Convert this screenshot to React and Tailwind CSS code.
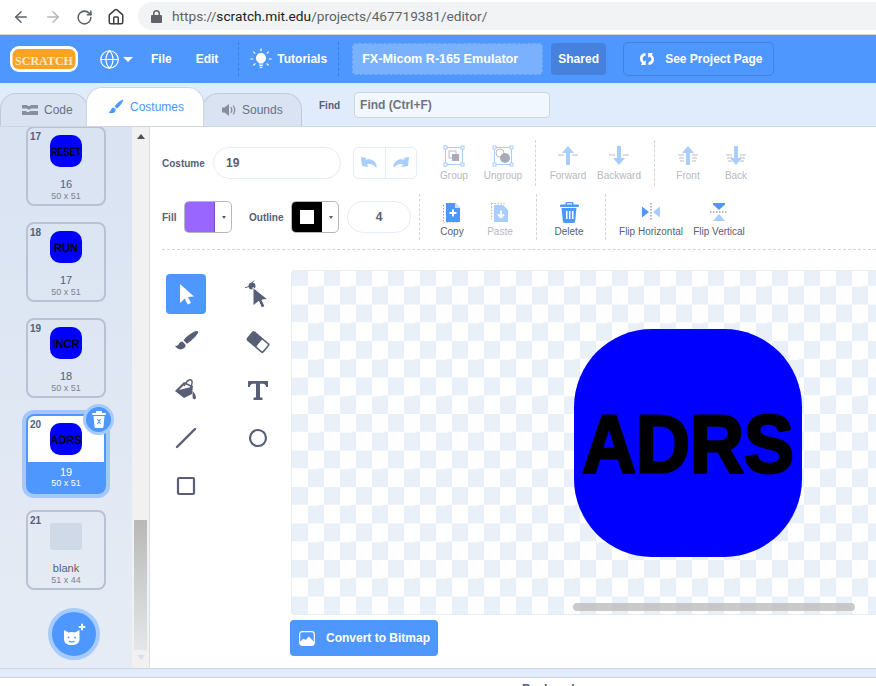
import { ArrowLeft, ArrowRight, RotateCw, Home, Globe } from "lucide-react";

const BLUE = "#4d97ff";

function Dashed({ className }) {
  return <span className={`block w-0 border-l border-dashed ${className}`} />;
}

function Logo() {
  return (
    <svg width="68" height="26" viewBox="0 0 68 26" className="shrink-0 overflow-visible">
      <rect width="68" height="26" rx="9" fill="#fff" />
      <rect x="2.500" y="3" width="63" height="20" rx="6" fill="#f9a326" />
      <text x="34" y="18.500" textAnchor="middle" fontFamily="'Liberation Serif', serif" fontWeight="700" fontSize="13" fill="#ffe9c4" textLength="58" lengthAdjust="spacingAndGlyphs">SCRATCH</text>
    </svg>
  );
}

function Bulb() {
  return (
    <svg width="22" height="22" viewBox="0 0 22 22" fill="#fff">
      <path d="M11 5a5 5 0 0 0-3 9c.6.5.9 1 1 1.600h4c.1-.6.4-1.100 1-1.600a5 5 0 0 0-3-9z" />
      <rect x="9" y="16.500" width="4" height="1.500" rx=".7" />
      <rect x="9.600" y="18.800" width="2.800" height="1.200" rx=".6" />
      <path d="M11 .8v2M3.500 3.800l1.400 1.400M18.500 3.800l-1.400 1.400M.8 11h2M19.200 11h2M3.800 17l1.300-1.200M18.200 17l-1.300-1.200" stroke="#fff" strokeWidth="1.200" strokeLinecap="round" />
    </svg>
  );
}

function ChromeBar() {
  return (
    <div className="h-[35px] shrink-0 flex items-center bg-white border-b border-[#d4d6d9]">
      <div className="w-[138px] flex items-center pl-[12px] gap-[14px] text-[#5f6368]">
        <ArrowLeft size={18} strokeWidth={2} />
        <ArrowRight size={18} strokeWidth={2} className="text-[#b4b6b9]" />
        <RotateCw size={17} strokeWidth={2.200} />
        <Home size={18} strokeWidth={2} className="text-[#3c4043]" />
      </div>
      <div className="flex-1 h-[28px] -mt-[2px] rounded-l-full bg-[#f1f3f4] flex items-center pl-[13px] font-['Roboto',sans-serif] text-[13.700px] text-[#5f6368]">
        <svg width="11" height="13" viewBox="0 0 11 13" className="mr-[10px]" fill="#5f6368">
          <path d="M2 5V3.600a3.500 3.500 0 0 1 7 0V5h1a1 1 0 0 1 1 1v6a1 1 0 0 1-1 1H1a1 1 0 0 1-1-1V6a1 1 0 0 1 1-1zm1.500 0h4V3.600a2 2 0 0 0-4 0z" />
        </svg>
        <span>https://<span className="text-[#202124]">scratch.mit.edu</span>/projects/467719381/editor/</span>
      </div>
    </div>
  );
}

function MenuBar() {
  return (
    <div className="h-[48px] shrink-0 flex items-center bg-[#4d97ff] text-white font-bold text-[12px]">
      <div className="ml-[10px]"><Logo /></div>
      <Globe size={21} strokeWidth={1.400} className="ml-[21px]" />
      <span className="ml-[3px] block w-0 h-0 border-x-[5px] border-x-transparent border-t-[5px] border-t-white" />
      <span className="ml-[18px]">File</span>
      <span className="ml-[24px]">Edit</span>
      <Dashed className="ml-[20px] h-[34px] border-[#3d7bd6]" />
      <span className="ml-[11px]"><Bulb /></span>
      <span className="ml-[5px]">Tutorials</span>
      <Dashed className="ml-[11px] h-[34px] border-[#3d7bd6]" />
      <div className="ml-[13px] w-[191px] h-[32px] rounded-[4px] border border-dashed border-[#5f9bf0] bg-[#79b1ff] flex items-center pl-[9px] text-[12.600px]">FX-Micom R-165 Emulator</div>
      <div className="ml-[8px] w-[55px] h-[32px] rounded-[4px] bg-[#4581dd] flex items-center justify-center">Shared</div>
      <div className="ml-[17px] w-[151px] h-[34px] rounded-[5px] border border-[#4281dc] flex items-center pl-[15px]">
        <svg width="16" height="14" viewBox="0 0 16 14" fill="#fff">
          <path d="M6.500 1C3 1.300 1 3.600 1 6.500c0 2 .8 3.500 2.200 4.600L2 13h4.800V8.200L5.200 9.600C4 8.800 3.600 7.600 3.700 6.400 3.800 5 4.800 4 6.500 3.700z" />
          <path d="M9.500 13c3.500-.3 5.500-2.600 5.500-5.500 0-2-.8-3.500-2.200-4.600L14 1H9.200v4.800l1.600-1.400c1.200.8 1.600 2 1.500 3.200-.1 1.400-1.100 2.400-2.800 2.700z" />
        </svg>
        <span className="ml-[10px]">See Project Page</span>
      </div>
    </div>
  );
}

function TabBar() {
  return (
    <div className="h-[44px] shrink-0 flex items-end bg-[#e0ecfc] border-b border-[#d0d6e0] text-[12px] text-[#6b7085]">
      <div className="w-[88px] h-[33px] rounded-t-[16px] border border-b-0 border-[#c2cad9] bg-[#d9e3f2] flex items-center pl-[21px] gap-[6px]">
        <svg width="16" height="12" viewBox="0 0 16 12" fill="#8a8e9c">
          <path d="M0 1h5l1 1h2l1-1h7v3.500H9l-1 1H6l-1-1H0zM0 7h4l1 1h2l1-1h8v4H0z" />
        </svg>
        Code
      </div>
      <div className="w-[118px] h-[39px] -ml-[2px] z-10 rounded-t-[16px] border border-b-0 border-[#d0d6e0] bg-white flex items-center pl-[21px] gap-[6px] text-[#4d97ff]">
        <svg width="16" height="16" viewBox="0 0 16 16" fill="#4d97ff">
          <path d="M15.500.5c-3.200 1-7 3.800-9 7.100l2.300 2C11.800 7.500 14.500 4 15.500.5z" />
          <path d="M5.500 8.500c-1.500.3-2.300 1.200-2.700 2.600C2.500 12.300 1.700 13 .5 13.200c1.800 1.500 5.800 1.600 7-1.500.2-.6.2-1 .1-1.400z" />
        </svg>
        Costumes
      </div>
      <div className="w-[100px] h-[33px] -ml-[2px] rounded-t-[16px] border border-b-0 border-[#c2cad9] bg-[#d9e3f2] flex items-center pl-[18px] gap-[5px]">
        <svg width="16" height="14" viewBox="0 0 16 14" fill="#8a8e9c">
          <path d="M1 4.500h2.500L8 1v12L3.500 9.500H1z" />
          <path d="M10 4.500c1 1.500 1 3.500 0 5M12.500 3c1.500 2.500 1.500 5.500 0 8" fill="none" stroke="#8a8e9c" strokeWidth="1.300" strokeLinecap="round" />
        </svg>
        Sounds
      </div>
      <span className="ml-[17px] self-center mt-[1px] text-[10px] font-bold text-[#575e75]">Find</span>
      <div className="ml-[14px] self-center w-[196px] h-[26px] rounded-[4px] border border-[#cfd4dc] bg-[#f1f7ff] flex items-center pl-[5px] font-bold text-[#6f7383]">Find (Ctrl+F)</div>
    </div>
  );
}

function Thumb({ label, textWidth }) {
  return (
    <svg width="32" height="32" viewBox="0 0 32 32" className="block overflow-visible">
      <rect width="32" height="32" rx="10" fill="#0000ff" />
      <text x="16" y="20.500" textAnchor="middle" fontFamily="'Liberation Sans', sans-serif" fontWeight="700" fontSize="12.500" textLength={textWidth} lengthAdjust="spacingAndGlyphs" textRendering="geometricPrecision">{label}</text>
    </svg>
  );
}

function Card({ num, label, textWidth, name, size, selected }) {
  if (selected) {
    return (
      <div className="relative w-[80px] h-[80px] shrink-0 rounded-[8px] border-2 border-[#4d97ff] bg-[#4d97ff] outline-4 outline-[#4d97ff]/40 flex flex-col text-white">
        <div className="h-[46px] bg-white rounded-t-[6px] flex justify-center pt-[7px]"><Thumb label={label} textWidth={textWidth} /></div>
        <span className="mt-[4px] text-center text-[11px] leading-[12px]">{name}</span>
        <span className="text-center text-[9px] leading-[11px]">{size}</span>
        <span className="absolute left-[2px] top-[1px] text-[10px] font-bold text-[#575e75]">{num}</span>
        <span className="absolute -right-[10px] -top-[12px] w-[31px] h-[31px] rounded-full bg-[#4d97ff] border-[3px] border-[#a6cbff] flex items-center justify-center">
          <svg width="14" height="17" viewBox="0 0 14 17" fill="#fff">
            <path d="M5 0h4a1 1 0 0 1 1 1v1h3a1 1 0 0 1 0 2H1a1 1 0 0 1 0-2h3V1a1 1 0 0 1 1-1z" />
            <path fillRule="evenodd" d="M1.500 5h11l-1 10.500a1.500 1.500 0 0 1-1.500 1.500H4a1.500 1.500 0 0 1-1.500-1.500zM5 8.500l1.500 2L5 12.500l.8.800L7 11.600l1.200 1.700.8-.8-1.500-2 1.500-2-.8-.8L7 9.400 5.800 7.700z" />
          </svg>
        </span>
      </div>
    );
  }
  return (
    <div className="relative w-[80px] h-[80px] shrink-0 rounded-[8px] border-2 border-[#b8c2d3] flex flex-col items-center text-[#575e75]">
      <div className="h-[46px] pt-[7px]">
        {label ? <Thumb label={label} textWidth={textWidth} /> : <div className="w-[32px] h-[27px] mt-[4px] rounded-[2px] bg-[#d0d9e7]" />}
      </div>
      <span className="mt-[4px] text-[11px] leading-[12px]">{name}</span>
      <span className="mt-[1px] text-[9px] leading-[11px] text-[#7d8294]">{size}</span>
      <span className="absolute left-[2px] top-[1px] text-[10px] font-bold">{num}</span>
    </div>
  );
}

function Sidebar() {
  return (
    <div className="relative w-[150px] shrink-0 flex border-r border-[#dcdfe4] overflow-hidden">
      <div className="w-[132px] bg-linear-to-b from-[#d9e3f2] to-[#e6ecf5] flex flex-col items-center -mt-[1px] gap-[16px]">
        <Card num="17" label="RESET" textWidth={30} name="16" size="50 x 51" />
        <Card num="18" label="RUN" textWidth={24} name="17" size="50 x 51" />
        <Card num="19" label="INCR" textWidth={27} name="18" size="50 x 51" />
        <Card num="20" label="ADRS" textWidth={31} name="19" size="50 x 51" selected />
        <Card num="21" name="blank" size="51 x 44" />
      </div>
      <div className="w-[17px] bg-[#f1f1f1] flex flex-col items-center">
        <span className="mt-[7px] w-0 h-0 border-x-[4px] border-x-transparent border-b-[5px] border-b-[#505050]" />
        <div className="mt-[381px] w-[13px] h-[130px] bg-linear-to-b from-[#b8b8b8] to-[#e4e6e9]" />
        <span className="mt-[5px] w-0 h-0 border-x-[4px] border-x-transparent border-t-[5px] border-t-[#dcdfe3]" />
      </div>
      <span className="absolute left-[48px] bottom-[8px] w-[52px] h-[52px] rounded-full bg-[#4d97ff] border-[4px] border-[#a6cbff] flex items-center justify-center">
        <svg width="26" height="24" viewBox="0 0 26 24" fill="#fff">
          <path d="M3 8l4.500 2.500c2-.7 4.500-.7 6.500 0L18.500 8v9c0 4-3 6-7.700 6S3 21 3 17z" />
          <path d="M8 19c1 1.200 4.500 1.200 5.500 0" fill="none" stroke="#4d97ff" strokeWidth="1.200" />
          <circle cx="7.500" cy="15.500" r=".9" fill="#4d97ff" />
          <circle cx="14" cy="15.500" r=".9" fill="#4d97ff" />
          <path d="M21 2.500v5M18.500 5h5" stroke="#fff" strokeWidth="2" strokeLinecap="round" />
        </svg>
      </span>
    </div>
  );
}

function IconBtn({ label, width, disabled, raised, children }) {
  return (
    <div className={`shrink-0 self-start flex flex-col items-center ${width} ${raised ? "-mt-[2px]" : ""}`}>
      <span className="h-[22px] flex items-center justify-center">{children}</span>
      <span className={`mt-[3px] text-[10px] leading-[12px] whitespace-nowrap ${disabled ? "text-[#b6b9c4]" : "text-[#575e75]"}`}>{label}</span>
    </div>
  );
}

const lightBlue = "#a9cdff";
const grayLine = "#b8bcc8";

function GroupIcon({ ungroup }) {
  return (
    <svg width="22" height="22" viewBox="0 0 22 22">
      <rect x="2.500" y="2.500" width="17" height="17" fill="none" stroke={lightBlue} strokeWidth="1" />
      {[[1, 1], [18, 1], [1, 18], [18, 18]].map(([x, y]) => (
        <rect key={x + "-" + y} x={x} y={y} width="3" height="3" fill="#fff" stroke={lightBlue} />
      ))}
      {ungroup ? (
        <>
          <circle cx="8" cy="8" r="4" fill="none" stroke={grayLine} />
          <circle cx="13" cy="13" r="5" fill="#a8acb8" />
        </>
      ) : (
        <>
          <rect x="6" y="6" width="7" height="7" fill="none" stroke={grayLine} />
          <rect x="9" y="9" width="7" height="7" fill="#a8acb8" />
        </>
      )}
    </svg>
  );
}

function LayerIcon({ down, double }) {
  return (
    <svg width="22" height="22" viewBox="0 0 22 22">
      <path d="M1 10h6M15 10h6" stroke={grayLine} strokeWidth="1.200" />
      {double && <path d="M2 13h5M15 13h5M3 16h4M15 16h4" stroke={grayLine} strokeWidth="1.200" />}
      <path d={down ? "M9 1h4v12h4l-6 7-6-7h4z" : "M11 1l6 7h-4v12H9V8H5z"} fill={lightBlue} />
    </svg>
  );
}

function Toolbar() {
  return (
    <div className="shrink-0 pt-[20px] text-[10px] text-[#575e75]">
      <div className="h-[32px] flex items-center pl-[12px]">
        <span className="w-[51px] font-bold">Costume</span>
        <div className="w-[128px] h-[32px] rounded-full border border-[#e6ecf3] flex items-center pl-[12px] text-[12px] font-bold">19</div>
        <div className="ml-[12px] w-[64px] h-[32px] rounded-[5px] border border-[#e6ecf3] flex -mt-[1px]">
          <span className="flex-1 flex items-center justify-center border-r border-[#e6ecf3]">
            <svg width="16" height="12" viewBox="0 0 16 12" fill={lightBlue}><path d="M0 0l5.500 1L4 3c4-1.500 9-.5 11.500 5v3c-2-2.500-6-5-9.500-3.500L7.500 10 1 9z" /></svg>
          </span>
          <span className="flex-1 flex items-center justify-center">
            <svg width="16" height="12" viewBox="0 0 16 12" fill={lightBlue}><path d="M16 0l-5.500 1L12 3C8 1.500 3 2.500.5 8v3c2-2.500 6-5 9.500-3.500L8.500 10 15 9z" /></svg>
          </span>
        </div>
        <span className="ml-[12px]" />
        <IconBtn label="Group" width="w-[50px]" disabled raised><GroupIcon /></IconBtn>
        <IconBtn label="Ungroup" width="w-[48px]" disabled raised><GroupIcon ungroup /></IconBtn>
        <Dashed className="ml-[8px] h-[46px] border-[#d4d6da]" />
        <span className="ml-[7px]" />
        <IconBtn label="Forward" width="w-[50px]" disabled raised><LayerIcon /></IconBtn>
        <IconBtn label="Backward" width="w-[52px]" disabled raised><LayerIcon down /></IconBtn>
        <Dashed className="ml-[9px] h-[46px] border-[#d4d6da]" />
        <span className="ml-[8px]" />
        <IconBtn label="Front" width="w-[50px]" disabled raised><LayerIcon double /></IconBtn>
        <IconBtn label="Back" width="w-[46px]" disabled raised><LayerIcon down double /></IconBtn>
      </div>
      <div className="h-[32px] mt-[22px] flex items-center pl-[12px]">
        <span className="w-[22px] font-bold">Fill</span>
        <div className="w-[48px] h-[32px] rounded-[5px] border border-[#b5b7bd] flex overflow-hidden">
          <span className="w-[31px] bg-[#9966ff] border border-[#774dcb] rounded-l-[5px] -m-px" />
          <span className="flex-1 flex items-center justify-center">
            <span className="w-0 h-0 ml-[2px] border-x-[2.500px] border-x-transparent border-t-[3px] border-t-[#575e75]" />
          </span>
        </div>
        <span className="ml-[17px] w-[42px] font-bold">Outline</span>
        <div className="w-[48px] h-[32px] rounded-[5px] border border-[#b5b7bd] flex overflow-hidden">
          <span className="w-[31px] bg-black -m-px flex items-center justify-center">
            <span className="w-[14px] h-[14px] bg-white" />
          </span>
          <span className="flex-1 flex items-center justify-center">
            <span className="w-0 h-0 ml-[2px] border-x-[2.500px] border-x-transparent border-t-[3px] border-t-[#575e75]" />
          </span>
        </div>
        <div className="ml-[8px] w-[64px] h-[32px] rounded-full border border-[#e6ecf3] flex items-center justify-center text-[12px] font-bold">4</div>
        <Dashed className="ml-[8px] h-[46px] border-[#d4d6da]" />
        <IconBtn label="Copy" width="w-[64px]">
          <svg width="20" height="21" viewBox="0 0 20 21">
            <path d="M4 1h9l5 5v14H4z" fill={BLUE} />
            <path d="M13 1v5h5z" fill="#cfe2ff" />
            <path d="M11 7.500v7M7.500 11h7" stroke="#fff" strokeWidth="2" />
            <path d="M1.500 3v18h15" fill="none" stroke="#9aa0ad" strokeWidth="1" strokeDasharray="1.500 1.500" />
          </svg>
        </IconBtn>
        <IconBtn label="Paste" width="w-[32px]" disabled>
          <svg width="20" height="21" viewBox="0 0 20 21">
            <path d="M1.500 1.500h13v2M1.500 1.500v16" fill="none" stroke={grayLine} strokeDasharray="1.500 1.500" />
            <path d="M4 3h9l5 5v12H4z" fill={lightBlue} />
            <path d="M11 8.500v7M8 12.500l3 3 3-3" fill="none" stroke="#fff" strokeWidth="1.800" />
          </svg>
        </IconBtn>
        <Dashed className="ml-[20px] h-[46px] border-[#d4d6da]" />
        <IconBtn label="Delete" width="w-[64px]">
          <svg width="19" height="21" viewBox="0 0 19 21" fill={BLUE}>
            <path d="M6.500 0h6a1 1 0 0 1 1 1v1.500h4.500a1 1 0 0 1 0 2.500H1a1 1 0 0 1 0-2.500h4.500V1a1 1 0 0 1 1-1zm.5 1.200v1.300h5V1.200z" />
            <path fillRule="evenodd" d="M2 6h15l-1.300 13a2 2 0 0 1-2 2H5.300a2 2 0 0 1-2-2zm4.500 3v8H8V9zm3 0v8H11V9zm3 0v8H14V9z" transform="translate(-.5 0)" />
          </svg>
        </IconBtn>
        <Dashed className="ml-[4px] h-[46px] border-[#d4d6da]" />
        <IconBtn label="Flip Horizontal" width="w-[90px]">
          <svg width="20" height="20" viewBox="0 0 20 20">
            <path d="M10 1v18" stroke="#9aa0ad" strokeWidth="1.500" strokeDasharray="1.500 1.500" />
            <path d="M1 4.500l7 5.500-7 5.500z" fill={BLUE} />
            <path d="M19 4.500l-7 5.500 7 5.500z" fill={lightBlue} />
          </svg>
        </IconBtn>
        <IconBtn label="Flip Vertical" width="w-[46px]">
          <svg width="20" height="20" viewBox="0 0 20 20">
            <path d="M1 10h18" stroke="#9aa0ad" strokeWidth="1.500" strokeDasharray="1.500 1.500" />
            <path d="M4 1h12v1.500L10 8 4 2.500z" fill={BLUE} />
            <path d="M4 19h12l-6-7z" fill={lightBlue} />
          </svg>
        </IconBtn>
      </div>
      <div className="mt-[16px] ml-[12px] border-t border-dashed border-[#d4d6da]" />
    </div>
  );
}

function Tool({ active, children }) {
  return (
    <div className={`w-[40px] h-[40px] rounded-[4px] flex items-center justify-center ${active ? "bg-[#4d97ff]" : ""}`}>{children}</div>
  );
}

function Tools() {
  const ink = "#575e75";
  return (
    <div className="ml-[16px] mt-[4px] shrink-0 grid grid-cols-[40px_40px] gap-x-[32px] gap-y-[8px] content-start">
      <Tool active>
        <svg width="22" height="24" viewBox="0 0 22 24" fill="#fff"><path d="M5 2l14 12.500-6 .5 3 6-3.500 1.500-2.700-6L5 21z" /></svg>
      </Tool>
      <Tool>
        <svg width="26" height="28" viewBox="0 0 26 28">
          <path d="M0 7.500c3-.2 5-1.500 6-3.500L9 .5" fill="none" stroke={ink} strokeWidth="1" />
          <circle cx="7" cy="6" r="3.500" fill={ink} />
          <path d="M8 7.500l15 12-6 .5 3 6.500-3.500 1.300-2.800-6.500L8 26z" fill={ink} stroke="#fff" strokeWidth="1" />
        </svg>
      </Tool>
      <Tool>
        <svg width="26" height="24" viewBox="0 0 26 24" fill={ink}>
          <path d="M25 1.500c-1-.8-2.500-.5-4 .3-4 2-8 5-10.500 8.500l3.500 3.500c3.500-2.500 8.500-6.500 11-10.800.3-.6.2-1.100 0-1.500z" />
          <path d="M9.500 11.500c-2 .3-3.200 1.300-4 3-.6 1.200-2 1.500-3.500 1.300 1 2 3.500 4 6.500 3.500 3-.5 4.500-2.700 4-4.500z" />
        </svg>
      </Tool>
      <Tool>
        <svg width="24" height="24" viewBox="0 0 24 24">
          <g transform="rotate(40 12 12)">
            <rect x="1" y="6" width="22" height="12" rx="2" fill={ink} />
            <rect x="13.500" y="7.500" width="8" height="9" rx="1" fill="#fff" />
          </g>
        </svg>
      </Tool>
      <Tool>
        <svg width="24" height="24" viewBox="0 0 24 24">
          <path d="M10 4L1 13l9 7 8-4 1-8z" fill={ink} />
          <path d="M5 12l6-6 6 3z" fill="#fff" />
          <path d="M10 8c2-4 5-7 7-6s1 5-1 9" fill="none" stroke={ink} strokeWidth="1.400" />
          <path d="M18.500 13c2 2 3.500 4.500 3.500 6.500a1.700 1.700 0 0 1-3.400 0z" fill={ink} />
        </svg>
      </Tool>
      <Tool>
        <svg width="22" height="22" viewBox="0 0 22 22" fill={ink}>
          <path d="M1 2h20v6h-1.800c-.4-2-1.200-3.300-3.200-3.300h-3v13.500l2.500.6V21H6.500v-2.200l2.500-.6V4.700H6c-2 0-2.800 1.300-3.200 3.300H1z" />
        </svg>
      </Tool>
      <Tool>
        <svg width="22" height="22" viewBox="0 0 22 22"><path d="M2 20L20 2" stroke={ink} strokeWidth="2.400" strokeLinecap="round" /></svg>
      </Tool>
      <Tool>
        <svg width="22" height="22" viewBox="0 0 22 22"><circle cx="11" cy="11" r="8" fill="none" stroke={ink} strokeWidth="2.200" /></svg>
      </Tool>
      <Tool>
        <svg width="22" height="22" viewBox="0 0 22 22"><rect x="3" y="3" width="16" height="16" rx="1" fill="none" stroke={ink} strokeWidth="2.200" /></svg>
      </Tool>
    </div>
  );
}

function Canvas() {
  return (
    <div className="relative h-[345px] rounded-l-[4px] border border-r-0 border-[#e6ecf3] overflow-hidden bg-[conic-gradient(#e9f0f8_25%,white_0_50%,#e9f0f8_0_75%,white_0)] bg-[length:32px_36.5px] bg-[position:-16px_-3px]">
      <svg width="228" height="228" viewBox="0 0 228 228" className="absolute left-[282px] top-[58px] overflow-visible">
        <rect width="228" height="228" rx="78" fill="#0000ff" />
        <text x="114" y="143" textAnchor="middle" fontFamily="'Liberation Sans', sans-serif" fontWeight="700" fontSize="82" textLength="212" lengthAdjust="spacingAndGlyphs" stroke="#000" strokeWidth="3" strokeLinejoin="round">ADRS</text>
      </svg>
      <div className="absolute left-[281px] top-[332px] w-[282px] h-[8px] rounded-full bg-[#bdbdbd]/80" />
    </div>
  );
}

export default function App() {
  return (
    <div className="h-[686px] flex flex-col overflow-hidden bg-white font-['Liberation_Sans',Arial,sans-serif]">
      <ChromeBar />
      <MenuBar />
      <TabBar />
      <div className="flex-1 min-h-0 flex">
        <Sidebar />
        <div className="flex-1 min-w-0 flex flex-col">
          <Toolbar />
          <div className="flex pt-[20px]">
            <Tools />
            <div className="ml-[13px] flex-1 min-w-0">
              <Canvas />
              <button className="mt-[5px] -ml-px w-[148px] h-[36px] rounded-[4px] bg-[#4d97ff] flex items-center pl-[9px] text-white font-bold text-[12px]">
                <svg width="16" height="15" viewBox="0 0 16 15" className="mr-[11px]">
                  <rect x=".7" y=".7" width="14.600" height="13.600" rx="2.500" fill="none" stroke="#fff" strokeWidth="1.200" />
                  <path d="M1 14v-3l3.500-3.500 2 1.500L10 5.500 15 11v3z" fill="#fff" />
                </svg>
                Convert to Bitmap
              </button>
            </div>
          </div>
        </div>
      </div>
      <div className="h-[10px] shrink-0 bg-[#e0ecfc] border-y border-[#d0d6e0]" />
      <div className="h-[8px] shrink-0 overflow-hidden pl-[522px] text-[12px] leading-[14px] font-bold text-[#575e75] bg-white">
        <div className="mt-[4px]">Backpack</div>
      </div>
    </div>
  );
}
